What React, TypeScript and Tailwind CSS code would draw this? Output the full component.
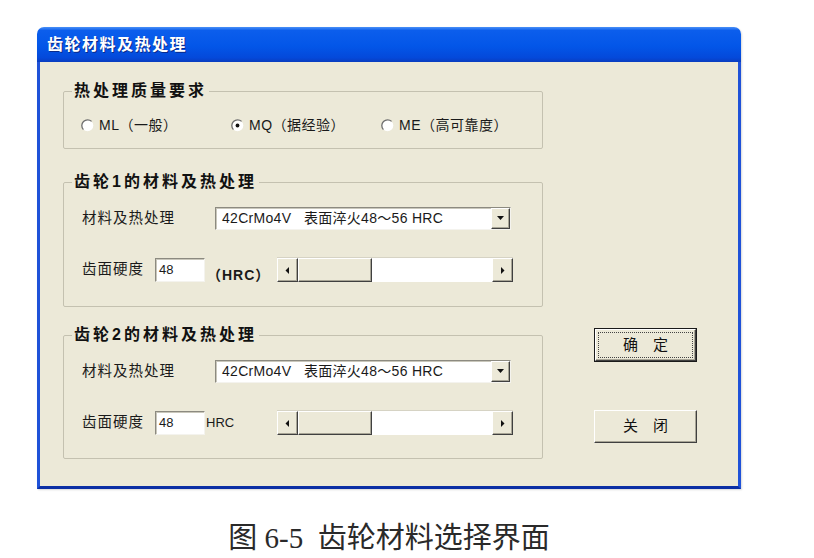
import React from 'react'

const UI = "font-['Liberation_Sans','Noto_Sans_CJK_SC',sans-serif]"
const RAISED =
  'border border-t-white border-l-white border-r-[#404040] border-b-[#404040] shadow-[inset_-1px_-1px_0_#a8a596] bg-[#ECE9D8]'
const SUNKEN =
  'border border-t-[#8c8a80] border-l-[#8c8a80] border-r-[#f4f3ee] border-b-[#f4f3ee] shadow-[inset_1px_1px_0_#c9c7bb] bg-white'

// 单选按钮
function Radio({ checked, label }: { checked?: boolean; label: string }) {
  return (
    <div className="flex items-center gap-[5px] h-[20px]">
      <svg width="13" height="13" viewBox="0 0 13 13" className="shrink-0">
        <circle cx="6.5" cy="6.5" r="5.8" fill="#fff" />
        <path d="M10.6 2.4 A5.8 5.8 0 0 0 2.4 10.6" stroke="#6e6e6e" strokeWidth="1.3" fill="none" />
        {checked && <circle cx="6.5" cy="6.5" r="1.9" fill="#111" />}
      </svg>
      <span className="text-[14px] tracking-[0.5px] text-[#1a1a1a] whitespace-nowrap">{label}</span>
    </div>
  )
}

function Arrow({ dir }: { dir: 'left' | 'right' | 'down' }) {
  const pts = dir === 'down' ? '1,2 8,2 4.5,6' : dir === 'left' ? '6,1 6,8 2.5,4.5' : '3,1 3,8 6.5,4.5'
  return (
    <svg width="9" height="9" viewBox="0 0 9 9">
      <polygon points={pts} fill="#111" />
    </svg>
  )
}

function Combo() {
  return (
    <div className={`flex h-[23px] w-[296px] ${SUNKEN}`}>
      <div className="flex-1 flex items-center pl-[6px] text-[14px] tracking-[0.3px] text-[#1a1a1a] whitespace-pre">
        42CrMo4V   表面淬火48～56 HRC
      </div>
      <div className={`w-[19px] flex items-center justify-center ${RAISED}`}>
        <Arrow dir="down" />
      </div>
    </div>
  )
}

function ScrollBar() {
  return (
    <div className="flex h-[25px] w-[236px] border-t border-[#d6d3c4]">
      <div className={`w-[21px] flex items-center justify-center ${RAISED}`}>
        <Arrow dir="left" />
      </div>
      <div className={`w-[74px] ${RAISED}`} />
      <div className="flex-1 bg-white" />
      <div className={`w-[21px] flex items-center justify-center ${RAISED}`}>
        <Arrow dir="right" />
      </div>
    </div>
  )
}

function Legend({ children }: { children: React.ReactNode }) {
  return (
    <legend className="px-[2px] text-[16px] leading-[20px] font-bold tracking-[3px] text-[#111]">{children}</legend>
  )
}

function GearGroup({ title, paren, className }: { title: string; paren: boolean; className: string }) {
  return (
    <fieldset className={`border border-[#c4c1b0] rounded-[2px] px-[8px] ${className}`}>
      <Legend>{title}</Legend>
      <div className="pl-[10px] flex flex-col">
        <div className="flex items-center mt-[15px]">
          <span className="w-[133px] text-[14.5px] tracking-[1px] text-[#1a1a1a]">材料及热处理</span>
          <Combo />
        </div>
        <div className="flex items-center mt-[27px] h-[25px]">
          <span className="w-[73px] text-[14.5px] tracking-[1px] text-[#1a1a1a]">齿面硬度</span>
          <div className={`w-[50px] h-[24px] flex items-center pl-[3px] text-[13px] text-[#1a1a1a] ${SUNKEN}`}>48</div>
          {paren ? (
            <span className="w-[72px] self-end translate-y-[4px] pl-[2px] text-[14px] tracking-[1px] font-bold text-[#1a1a1a] whitespace-nowrap">
              （HRC）
            </span>
          ) : (
            <span className="w-[72px] pl-[1px] text-[13px] text-[#1a1a1a]">HRC</span>
          )}
          <ScrollBar />
        </div>
      </div>
    </fieldset>
  )
}

export default function App() {
  return (
    <div className={`min-h-screen bg-white pl-[37px] pt-[27px] ${UI}`}>
      <div className="w-[704px]">
        {/* 窗口 */}
        <div className="rounded-t-[7px] overflow-hidden shadow-[1px_1px_2px_rgba(0,0,0,0.15)]">
          <div className="h-[35px] flex items-center pl-[10px] bg-[linear-gradient(180deg,#4a90f7_0%,#0c5eec_10%,#0356e8_55%,#0449da_88%,#0a3cbf_100%)]">
            <span className="text-white text-[16px] font-bold tracking-[1.5px] [text-shadow:1px_1px_0_#0a2a8a]">
              齿轮材料及热处理
            </span>
          </div>
          <div className="h-[427px] bg-[#ECE9D8] border-x-[3px] border-b-[3px] border-x-[#1f52d8] border-b-[#0b2fa4] flex pt-[19px] pl-[23px]">
            <div className="w-[480px] flex flex-col">
              <fieldset className="h-[68px] border border-[#c4c1b0] rounded-[2px] px-[8px]">
                <Legend>热处理质量要求</Legend>
                <div className="grid grid-cols-[150px_150px_auto] mt-[14px] pl-[9px]">
                  <Radio label="ML（一般）" />
                  <Radio checked label="MQ（据经验）" />
                  <Radio label="ME（高可靠度）" />
                </div>
              </fieldset>
              <GearGroup title="齿轮1的材料及热处理" paren className="h-[135px] mt-[23px]" />
              <GearGroup title="齿轮2的材料及热处理" paren={false} className="h-[134px] mt-[18px]" />
            </div>
            <div className="ml-[51px] pt-[247px] flex flex-col">
              <div className="w-[103px] h-[34px] border border-[#1a1a1a] flex">
                <div className={`flex-1 p-[2px] flex ${RAISED}`}>
                  <div className="flex-1 border border-dotted border-[#444] flex items-center justify-center text-[15px] text-[#111]">
                    确　定
                  </div>
                </div>
              </div>
              <div
                className={`w-[103px] h-[33px] mt-[48px] flex items-center justify-center text-[15px] text-[#111] ${RAISED}`}
              >
                关　闭
              </div>
            </div>
          </div>
        </div>
        {/* 图注 */}
        <div className="mt-[34px] text-center text-[29px] leading-[30px] text-[#2a2a2a] whitespace-pre font-['Liberation_Serif','Noto_Sans_CJK_SC',serif]">
          图 6-5  齿轮材料选择界面
        </div>
      </div>
    </div>
  )
}
